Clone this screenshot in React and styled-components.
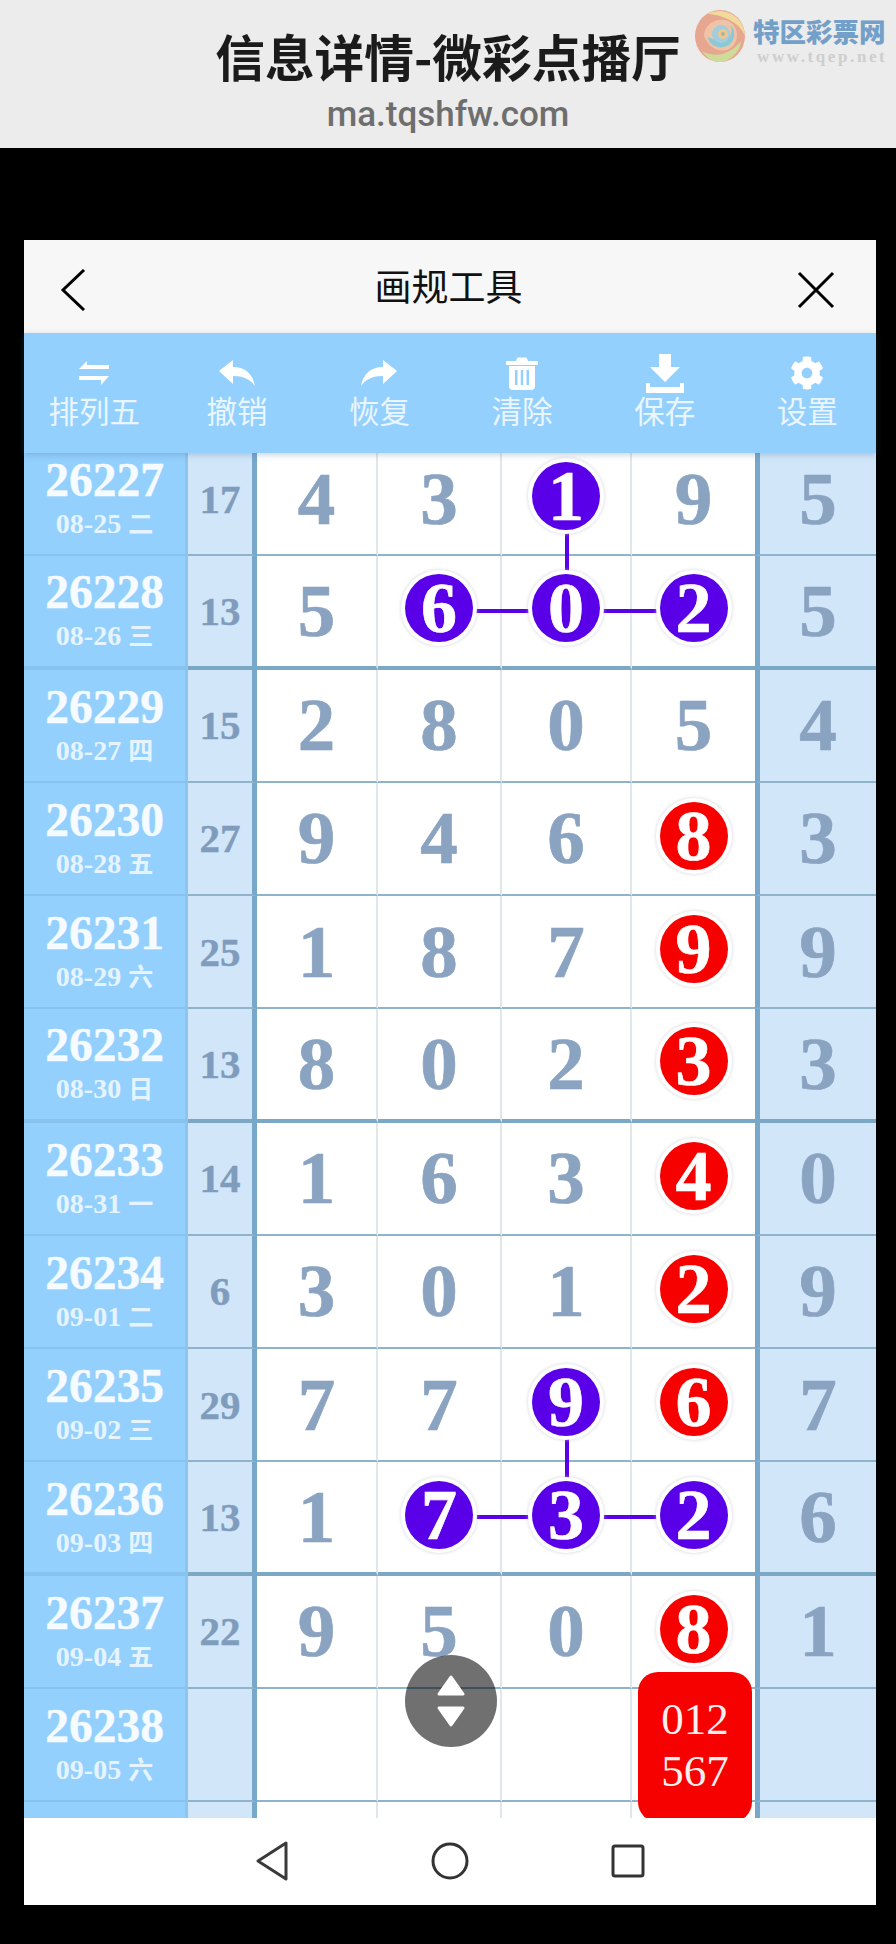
import React from "react";
import styled, { createGlobalStyle } from "styled-components";
import { FaCog } from "react-icons/fa";

const rows = [
  { no: "26227", date: "08-25", day: "二", sum: "17", nums: [["4"], ["3"], ["1", "p"], ["9"]], last: "5" },
  { no: "26228", date: "08-26", day: "三", sum: "13", nums: [["5"], ["6", "p"], ["0", "p", ["left", "right", "up"]], ["2", "p"]], last: "5", thick: true },
  { no: "26229", date: "08-27", day: "四", sum: "15", nums: [["2"], ["8"], ["0"], ["5"]], last: "4" },
  { no: "26230", date: "08-28", day: "五", sum: "27", nums: [["9"], ["4"], ["6"], ["8", "r"]], last: "3" },
  { no: "26231", date: "08-29", day: "六", sum: "25", nums: [["1"], ["8"], ["7"], ["9", "r"]], last: "9" },
  { no: "26232", date: "08-30", day: "日", sum: "13", nums: [["8"], ["0"], ["2"], ["3", "r"]], last: "3", thick: true },
  { no: "26233", date: "08-31", day: "一", sum: "14", nums: [["1"], ["6"], ["3"], ["4", "r"]], last: "0" },
  { no: "26234", date: "09-01", day: "二", sum: "6", nums: [["3"], ["0"], ["1"], ["2", "r"]], last: "9" },
  { no: "26235", date: "09-02", day: "三", sum: "29", nums: [["7"], ["7"], ["9", "p"], ["6", "r"]], last: "7" },
  { no: "26236", date: "09-03", day: "四", sum: "13", nums: [["1"], ["7", "p"], ["3", "p", ["left", "right", "up"]], ["2", "p"]], last: "6", thick: true },
  { no: "26237", date: "09-04", day: "五", sum: "22", nums: [["9"], ["5"], ["0"], ["8", "r"]], last: "1" },
  { no: "26238", date: "09-05", day: "六", sum: "", nums: [[""], [""], [""], [""]], last: "", kill: ["012", "567"] },
  { no: "", date: "", day: "", sum: "", nums: [[""], [""], [""], [""]], last: "" },
];

function SwapIcon() {
  return (
    <svg width="30" height="24" viewBox="0 0 30 24" fill="#fff">
      <path d="M8 0 L8 4 L30 4 L30 8 L0 8 Z" />
      <path d="M0 15 L30 15 L22 24 L22 19 L0 19 Z" />
    </svg>
  );
}

function UndoIcon() {
  return (
    <svg width="36" height="26" viewBox="0 0 36 26" fill="#fff">
      <path d="M0 11 L14 0 V7 C26 7 34 14 36 26 C31 19 24 16 14 16 V24 Z" />
    </svg>
  );
}

function RedoIcon() {
  return (
    <svg width="36" height="26" viewBox="0 0 36 26" fill="#fff">
      <path d="M36 11 L22 0 V7 C10 7 2 14 0 26 C5 19 12 16 22 16 V24 Z" />
    </svg>
  );
}

function TrashIcon() {
  return (
    <svg width="32" height="33" viewBox="0 0 32 33" fill="#fff">
      <path d="M10 4 L11.5 0.5 H20.5 L22 4 H31 a1 1 0 0 1 1 1 V7 a1 1 0 0 1 -1 1 H1 a1 1 0 0 1 -1 -1 V5 a1 1 0 0 1 1 -1 Z" />
      <path
        fillRule="evenodd"
        d="M3 9 H29 V29 a4 4 0 0 1 -4 4 H7 a4 4 0 0 1 -4 -4 Z M9 13 V28 H11.5 V13 Z M14.8 13 V28 H17.2 V13 Z M20.5 13 V28 H23 V13 Z"
      />
    </svg>
  );
}

function SaveIcon() {
  return (
    <svg width="38" height="39" viewBox="0 0 38 39" fill="#fff">
      <path d="M13 0 H25 V13 H34 L19 28 L4 13 H13 Z" />
      <path d="M0 29 H4 V33 H34 V29 H38 V39 H0 Z" />
    </svg>
  );
}

const tools = [
  { label: "排列五", icon: <SwapIcon /> },
  { label: "撤销", icon: <UndoIcon /> },
  { label: "恢复", icon: <RedoIcon /> },
  { label: "清除", icon: <TrashIcon /> },
  { label: "保存", icon: <SaveIcon /> },
  { label: "设置", icon: <FaCog size={34} /> },
];

const App = () => {
  return (
    <Page>
      <GlobalStyle />
      <TopBand>
        <TopTitle>信息详情-微彩点播厅</TopTitle>
        <TopUrl>ma.tqshfw.com</TopUrl>
        <Logo>
          <svg width="52" height="54" viewBox="0 0 52 54">
            <ellipse cx="26" cy="27" rx="25" ry="26" fill="#e59a7f" />
            <path d="M14 5 C28 -3 50 6 51 27 C46 14 30 6 14 5 Z" fill="#f3d88f" />
            <path d="M8 42 C22 50 38 44 47 32 C46 44 34 54 24 53 C17 52 12 48 8 42 Z" fill="#c9d98b" />
            <path d="M10 27 C10 14 24 8 34 12 C44 16 46 30 38 38 C30 45 16 42 10 27 Z" fill="#f0bd9a" />
            <path d="M14 28 C14 36 26 42 35 36 C42 30 42 20 36 16 C42 26 30 36 14 28 Z" fill="#7cc4d0" />
            <circle cx="27" cy="25" r="9" fill="#96c8e0" />
            <circle cx="29" cy="25" r="5" fill="#ecc27a" />
            <circle cx="29" cy="25" r="2" fill="#a8a898" />
          </svg>
          <LogoText>
            <LogoName>特区彩票网</LogoName>
            <LogoUrl>www.tqep.net</LogoUrl>
          </LogoText>
        </Logo>
      </TopBand>

      <Screen>
        <NavBar>
          <svg width="26" height="42" viewBox="0 0 26 42" fill="none" stroke="#000" strokeWidth="3">
            <path d="M24 1 L3 21 L24 41" />
          </svg>
          <NavTitle>画规工具</NavTitle>
          <svg width="38" height="38" viewBox="0 0 38 38" fill="none" stroke="#000" strokeWidth="3">
            <path d="M2 2 L36 36 M36 2 L2 36" />
          </svg>
        </NavBar>

        <Toolbar>
          {tools.map((tool) => (
            <Tool key={tool.label}>
              <ToolIcon>{tool.icon}</ToolIcon>
              <ToolLabel>{tool.label}</ToolLabel>
            </Tool>
          ))}
        </Toolbar>

        <Scroller>
          <Table>
            {rows.map((row, i) => (
              <Row key={i}>
                <IssueCell $thick={row.thick}>
                  <IssueNo>{row.no}</IssueNo>
                  {row.date && (
                    <IssueDate>
                      {row.date} <span>{row.day}</span>
                    </IssueDate>
                  )}
                </IssueCell>
                <SumCell $thick={row.thick}>{row.sum}</SumCell>
                {row.nums.map(([value, tone, links], j) => (
                  <NumCell key={j} $thick={row.thick}>
                    {links && links.map((dir) => <Link key={dir} $dir={dir} />)}
                    {tone ? <Ball $tone={tone}>{value}</Ball> : value}
                    {row.kill && j === 3 && (
                      <KillBox>
                        {row.kill.map((line) => (
                          <div key={line}>{line}</div>
                        ))}
                      </KillBox>
                    )}
                  </NumCell>
                ))}
                <LastCell $thick={row.thick}>{row.last}</LastCell>
              </Row>
            ))}
          </Table>
          <FloatButton>
            <svg width="30" height="54" viewBox="0 0 30 54" fill="#fff" stroke="#fff" strokeWidth="3" strokeLinejoin="round">
              <path d="M15 3 L27 20 H3 Z" />
              <path d="M3 34 H27 L15 51 Z" />
            </svg>
          </FloatButton>
        </Scroller>

        <BottomNav>
          <svg width="34" height="40" viewBox="0 0 34 40" fill="none" stroke="#3a3a3a" strokeWidth="3" strokeLinejoin="round">
            <path d="M31 2 V38 L3 20 Z" />
          </svg>
          <svg width="38" height="38" viewBox="0 0 38 38" fill="none" stroke="#333" strokeWidth="3">
            <circle cx="19" cy="19" r="17" />
          </svg>
          <svg width="34" height="34" viewBox="0 0 34 34" fill="none" stroke="#333" strokeWidth="3">
            <rect x="2" y="2" width="30" height="30" rx="2" />
          </svg>
        </BottomNav>
      </Screen>
    </Page>
  );
};

export default App;

const GlobalStyle = createGlobalStyle`
  html, body {
    margin: 0;
    padding: 0;
    background: #000;
  }
`;

const Page = styled.div`
  width: 896px;
  height: 1944px;
  overflow: hidden;
  background: #000;
  font-family: "Noto Sans CJK SC", "Noto Sans", sans-serif;
`;

const TopBand = styled.div`
  position: relative;
  height: 148px;
  background: #ececec;
  display: flex;
  flex-direction: column;
  align-items: center;
`;

const TopTitle = styled.div`
  margin-top: 24px;
  height: 62px;
  line-height: 62px;
  font-size: 49.7px;
  font-weight: 700;
  color: #1b1b1b;
`;

const TopUrl = styled.div`
  margin-top: 6px;
  line-height: 46px;
  font-family: Roboto, "Noto Sans", sans-serif;
  font-size: 35px;
  font-weight: 500;
  color: #6e6e6e;
`;

const Logo = styled.div`
  position: absolute;
  left: 694px;
  top: 9px;
  display: flex;
  align-items: flex-start;
  gap: 7px;
  opacity: 0.85;
`;

const LogoText = styled.div`
  padding-top: 5px;
`;

const LogoName = styled.div`
  font-size: 26.5px;
  line-height: 34px;
  font-weight: 900;
  color: #5f93c4;
  white-space: nowrap;
`;

const LogoUrl = styled.div`
  margin-top: 1px;
  font-family: "Liberation Serif", serif;
  font-size: 17px;
  line-height: 15px;
  font-weight: 700;
  letter-spacing: 2.6px;
  padding-left: 4px;
  color: #c9c9c9;
  white-space: nowrap;
`;

const Screen = styled.div`
  margin: 92px 0 0 24px;
  width: 852px;
  height: 1665px;
  background: #fff;
  display: flex;
  flex-direction: column;
`;

const NavBar = styled.div`
  height: 93px;
  flex: none;
  background: #f7f7f7;
  padding: 7px 41px 0 36px;
  box-sizing: border-box;
  display: flex;
  align-items: center;
  justify-content: space-between;
`;

const NavTitle = styled.div`
  margin-top: -10px;
  margin-left: 14px;
  font-size: 37px;
  color: #111;
`;

const Toolbar = styled.div`
  position: relative;
  z-index: 5;
  height: 120px;
  flex: none;
  background: #94d0fd;
  box-shadow: 0 2px 6px rgba(70, 110, 150, 0.3);
  display: grid;
  grid-template-columns: repeat(6, 142.6px);
`;

const Tool = styled.div`
  margin-left: -2px;
  display: flex;
  flex-direction: column;
  align-items: center;
  color: #fff;
`;

const ToolIcon = styled.div`
  height: 40px;
  margin-top: 20px;
  display: flex;
  align-items: center;
  justify-content: center;
`;

const ToolLabel = styled.div`
  margin-top: -3px;
  line-height: 40px;
  font-size: 30.5px;
  color: #eaf6ff;
`;

const Scroller = styled.div`
  position: relative;
  height: 1365px;
  flex: none;
  overflow: hidden;
`;

const Table = styled.div`
  margin-top: -10px;
  font-family: "Liberation Serif", "Noto Sans CJK SC", serif;
  font-weight: 700;
`;

const Row = styled.div`
  display: grid;
  grid-template-columns: 164px 69px 121px 124px 130px 123px 121px;
  height: 113.27px;
`;

const lineOf = (thick) =>
  thick ? "border-bottom: 4px solid #7ba9c5;" : "border-bottom: 2px solid #8fb3cb;";

const IssueCell = styled.div`
  box-sizing: border-box;
  background: #94d0fd;
  border-right: 3px solid #8bc5f0;
  border-bottom: ${(p) => (p.$thick ? "4px" : "2px")} solid #88c3ef;
  display: flex;
  flex-direction: column;
  align-items: center;
  justify-content: center;
`;

const IssueNo = styled.div`
  font-size: 47.5px;
  line-height: 52px;
  color: #f5fbff;
  -webkit-text-stroke: 0.4px currentColor;
`;

const IssueDate = styled.div`
  font-size: 28px;
  line-height: 36px;
  color: #e6f4ff;
  span {
    font-size: 25px;
  }
`;

const SumCell = styled.div`
  box-sizing: border-box;
  background: #d1e6f9;
  border-right: 5px solid #77a7c9;
  ${(p) => lineOf(p.$thick)}
  display: flex;
  align-items: center;
  justify-content: center;
  font-size: 41px;
  color: #7f9cbd;
  -webkit-text-stroke: 0.4px currentColor;
`;

const NumCell = styled.div`
  position: relative;
  box-sizing: border-box;
  border-right: 2px solid #dfe6ec;
  ${(p) => lineOf(p.$thick)}
  display: flex;
  align-items: center;
  justify-content: center;
  font-size: 75px;
  color: #8aa3c1;
  -webkit-text-stroke: 0.7px currentColor;
  &:nth-child(6) {
    border-right: none;
  }
`;

const LastCell = styled.div`
  box-sizing: border-box;
  background: #d1e6f9;
  border-left: 5px solid #77a7c9;
  ${(p) => lineOf(p.$thick)}
  display: flex;
  align-items: center;
  justify-content: center;
  font-size: 75px;
  color: #8aa3c1;
  -webkit-text-stroke: 0.7px currentColor;
`;

const Ball = styled.div`
  position: relative;
  z-index: 2;
  margin-top: -5px;
  width: 68px;
  height: 68px;
  border-radius: 50%;
  background: ${(p) => (p.$tone === "r" ? "#f70000" : "#5a00e8")};
  box-shadow: 0 0 0 4px #fff, 0 0 3px 5px rgba(190, 190, 200, 0.4);
  display: flex;
  align-items: center;
  justify-content: center;
  color: #fff;
  font-size: 72px;
  line-height: 68px;
`;

const Link = styled.div`
  position: absolute;
  z-index: 1;
  background: #5a00e8;
  ${(p) =>
    p.$dir === "left" &&
    "left: -67px; top: 53px; width: 128px; height: 4px;"}
  ${(p) =>
    p.$dir === "right" &&
    "left: 64px; top: 53px; width: 128px; height: 4px;"}
  ${(p) =>
    p.$dir === "up" &&
    "left: 63px; top: -60px; width: 4px; height: 110px;"}
`;

const KillBox = styled.div`
  position: absolute;
  z-index: 3;
  left: 6px;
  top: -17px;
  width: 114px;
  height: 150px;
  padding-top: 21px;
  box-sizing: border-box;
  border-radius: 20px;
  background: #f70000;
  color: #fbeeee;
  font-size: 45px;
  font-weight: 400;
  line-height: 52px;
  text-align: center;
  -webkit-text-stroke: 0;
`;

const FloatButton = styled.div`
  position: absolute;
  z-index: 4;
  left: 381px;
  top: 1202px;
  width: 92px;
  height: 92px;
  border-radius: 50%;
  background: rgba(0, 0, 0, 0.56);
  display: flex;
  align-items: center;
  justify-content: center;
`;

const BottomNav = styled.div`
  flex: 1;
  background: #fff;
  display: grid;
  grid-template-columns: repeat(3, 178px);
  justify-content: center;
  justify-items: center;
  align-items: center;
  padding-bottom: 1px;
`;
